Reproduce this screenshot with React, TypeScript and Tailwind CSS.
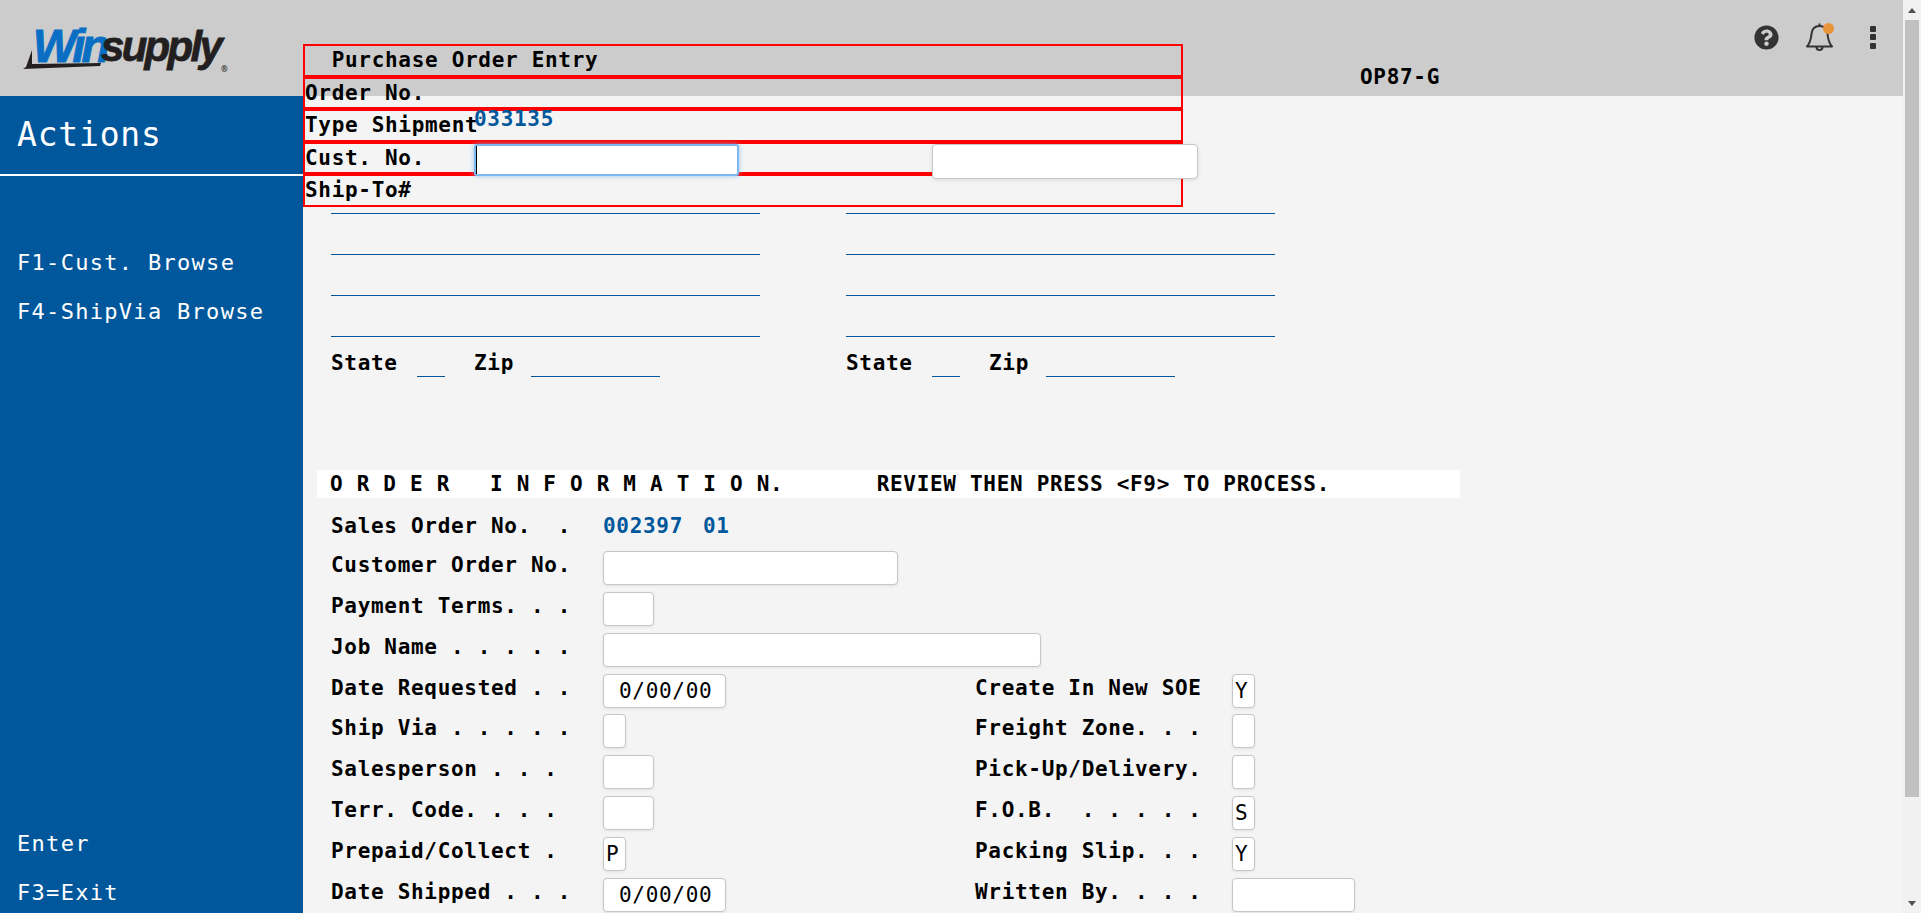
import { FaQuestionCircle } from 'react-icons/fa'

const mono = "font-['DejaVu_Sans_Mono','Liberation_Mono',monospace] text-[21px] tracking-[0.69px]"

type Row = {
  label: string
  width?: number
  value?: string
  right?: string
  rightWidth?: number
  rightValue?: string
}

const rows: Row[] = [
  { label: 'Customer Order No.', width: 295 },
  { label: 'Payment Terms. . .', width: 51 },
  { label: 'Job Name . . . . .', width: 438 },
  { label: 'Date Requested . .', width: 123, value: '0/00/00', right: 'Create In New SOE', rightWidth: 23, rightValue: 'Y' },
  { label: 'Ship Via . . . . .', width: 23, right: 'Freight Zone. . .', rightWidth: 23 },
  { label: 'Salesperson . . .', width: 51, right: 'Pick-Up/Delivery.', rightWidth: 23 },
  { label: 'Terr. Code. . . .', width: 51, right: 'F.O.B.  . . . . .', rightWidth: 23, rightValue: 'S' },
  { label: 'Prepaid/Collect .', width: 23, value: 'P', right: 'Packing Slip. . .', rightWidth: 23, rightValue: 'Y' },
  { label: 'Date Shipped . . .', width: 123, value: '0/00/00', right: 'Written By. . . .', rightWidth: 123 },
]

function Field({ width, value }: { width: number; value?: string }) {
  const long = width > 100
  return (
    <input
      readOnly
      value={value ?? ''}
      style={{ width }}
      className={`h-[34px] shrink-0 rounded-[4px] border border-[#c6c6c6] bg-white shadow-[0_1px_3px_rgba(0,0,0,0.08)] outline-none text-black ${mono} font-normal ${long ? 'pl-[15px]' : 'pl-[2px]'}`}
    />
  )
}

function Address() {
  return (
    <div className="w-[429px]">
      <div className="flex flex-col gap-[40px]">
        <div className="h-px bg-[#01579b]" />
        <div className="h-px bg-[#01579b]" />
        <div className="h-px bg-[#01579b]" />
        <div className="h-px bg-[#01579b]" />
      </div>
      <div className={`flex h-[40px] items-start pt-[14px] font-bold text-black ${mono} leading-[24px]`}>
        <span className="w-[86px]">State</span>
        <span className="h-[26px] w-[28px] border-b border-[#01579b]" />
        <span className="ml-[29px] w-[57px]">Zip</span>
        <span className="h-[26px] w-[129px] border-b border-[#01579b]" />
      </div>
    </div>
  )
}

function Logo() {
  return (
    <div className="relative ml-[23px] mt-[20px] h-[52px] w-[206px] font-['Liberation_Sans',Arial,sans-serif] font-bold italic leading-[52px]">
      <span className="absolute left-[10px] top-0 text-[46px] tracking-[-3.6px] text-[#0a6fc4] [-webkit-text-stroke:1px_#0a6fc4]">Win</span>
      <span className="absolute left-[78px] top-[1px] text-[42px] tracking-[-2.7px] text-[#231f20] [-webkit-text-stroke:0.8px_#231f20]">supply</span>
      <svg className="absolute left-0 top-[28px]" width="80" height="22" viewBox="0 0 80 22">
        <path d="M9 2 L3 19 L0 21 L77 18 L78 15 L9 16 Z" fill="#231f20" />
      </svg>
      <span className="absolute left-[198px] top-[23px] font-sans text-[8px] not-italic text-[#231f20]">®</span>
    </div>
  )
}

export default function App() {
  return (
    <div className="flex h-[913px] overflow-hidden bg-[#f4f4f4]">
      <div className="flex w-[1903px] flex-col">
        {/* Header */}
        <header className="flex h-[96px] shrink-0 items-start bg-[#cccccc]">
          <Logo />
          <div className={`ml-[1131px] mt-[64px] font-bold text-black ${mono} leading-[27px]`}>OP87-G</div>
          <div className="ml-auto mr-[27px] mt-[23px] flex items-center">
            <FaQuestionCircle className="h-[25px] w-[25px] text-[#333333]" />
            <div className="relative ml-[27px] h-[28px] w-[27px]">
              <svg width="27" height="28" viewBox="0 0 27 28" fill="none" stroke="#333333" strokeWidth="2">
                <path d="M13.5 3 C8.5 3 6 6.5 5.5 11 C5 16 4 20 1 23.5 H26 C23 20 22 16 21.5 11 C21 6.5 18.5 3 13.5 3 Z" strokeLinejoin="round" />
                <path d="M13.5 0.5 V3" />
                <path d="M10.5 24 a3 3 0 0 0 6 0" />
              </svg>
              <span className="absolute left-[17px] top-0 h-[11px] w-[11px] rounded-full bg-[#e8943a]" />
            </div>
            <div className="ml-[37px] flex w-[6px] flex-col gap-[2.5px]">
              <span className="h-[6px] w-[6px] rounded-[1px] bg-[#333333]" />
              <span className="h-[6px] w-[6px] rounded-[1px] bg-[#333333]" />
              <span className="h-[6px] w-[6px] rounded-[1px] bg-[#333333]" />
            </div>
          </div>
        </header>

        <div className="flex min-h-0 flex-1">
          {/* Sidebar */}
          <aside className={`w-[303px] shrink-0 bg-[#01579b] text-white ${mono}`}>
            <div className="h-[80px] border-b-2 border-white pl-[17px] text-[33px] leading-[77px] tracking-[0.8px]">Actions</div>
            <div className="mt-[62px] pl-[17px] text-[22px] leading-[49px] tracking-[1.3px]">
              <div>F1-Cust. Browse</div>
              <div>F4-ShipVia Browse</div>
              <div className="mt-[483px]">Enter</div>
              <div>F3=Exit</div>
            </div>
          </aside>

          {/* Main */}
          <main className={`relative z-10 -mt-[52px] min-w-0 flex-1 whitespace-pre text-black ${mono}`}>
            <div className="w-[880px] font-bold leading-[29px]">
              <div className="h-[32.5px] border-2 border-[#ff0000]">{'  Purchase Order Entry'}</div>
              <div className="h-[32.5px] border-2 border-[#ff0000]">Order No.</div>
              <div className="flex h-[32.5px] border-2 border-[#ff0000]">
                <span className="w-[169px] shrink-0">Type Shipment</span>
                <span className="-mt-[6px] text-[#01579b]">033135</span>
              </div>
              <div className="flex h-[32.5px] items-start border-2 border-[#ff0000]">
                <span className="w-[169px] shrink-0">Cust. No.</span>
                <div className="relative z-10 h-[32px] w-[265px] shrink-0 rounded-[3px] border-2 border-[#7db9ee] bg-white shadow-[0_0_5px_rgba(125,185,238,0.8)]">
                  <span className="absolute left-0 top-0 h-full w-px bg-black" />
                </div>
                <input
                  readOnly
                  className="relative z-10 ml-[193px] h-[35px] w-[266px] shrink-0 rounded-[4px] border border-[#c6c6c6] bg-white shadow-[0_1px_4px_rgba(0,0,0,0.1)] outline-none"
                />
              </div>
              <div className="h-[32.5px] border-2 border-[#ff0000]">Ship-To#</div>
            </div>

            <div className="ml-[28px] mt-[6px] flex gap-[86px]">
              <Address />
              <Address />
            </div>

            <div className="ml-[14px] mt-[93px] h-[28px] w-[1143px] bg-white pl-[13px] font-bold leading-[28px]">
              {'O R D E R   I N F O R M A T I O N.       REVIEW THEN PRESS <F9> TO PROCESS.'}
            </div>

            <div className="ml-[28px] mt-[13px] flex h-[40.8px] font-bold leading-[30px]">
              <span className="w-[272px]">Sales Order No.  .</span>
              <span className="text-[#01579b]">002397</span>
              <span className="ml-[20px] text-[#01579b]">01</span>
            </div>

            {rows.map((row) => (
              <div key={row.label} className="ml-[28px] flex h-[40.8px] items-start font-bold leading-[29px]">
                <span className="w-[272px] shrink-0">{row.label}</span>
                {row.width !== undefined && <Field width={row.width} value={row.value} />}
                {row.right && (
                  <div className="absolute left-[672px] flex">
                    <span className="w-[257px] shrink-0">{row.right}</span>
                    <Field width={row.rightWidth ?? 23} value={row.rightValue} />
                  </div>
                )}
              </div>
            ))}
          </main>
        </div>
      </div>

      {/* Scrollbar */}
      <div className="flex w-[18px] shrink-0 flex-col items-end bg-[#f1f1f1]">
        <div className="flex h-[20px] w-full items-center justify-center">
          <span className="h-0 w-0 border-x-[4px] border-b-[5px] border-x-transparent border-b-[#505050]" />
        </div>
        <div className="mr-[2px] h-[777px] w-[14px] bg-[#c1c1c1]" />
        <div className="mt-auto flex h-[20px] w-full items-center justify-center">
          <span className="h-0 w-0 border-x-[4px] border-t-[5px] border-x-transparent border-t-[#505050]" />
        </div>
      </div>
    </div>
  )
}
